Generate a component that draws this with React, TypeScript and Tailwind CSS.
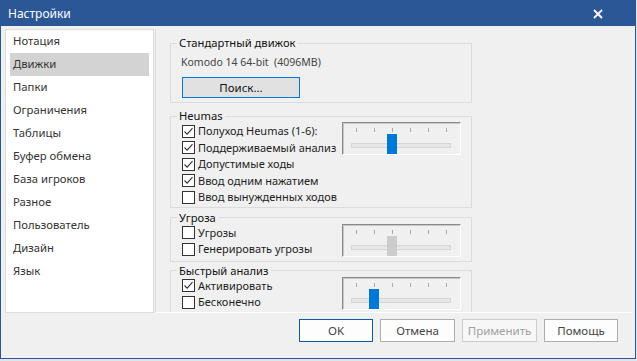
import React from 'react';

const sections = [
  'Нотация',
  'Движки',
  'Папки',
  'Ограничения',
  'Таблицы',
  'Буфер обмена',
  'База игроков',
  'Разное',
  'Пользователь',
  'Дизайн',
  'Язык',
];

const Check: React.FC<{ checked?: boolean; label: string }> = ({ checked, label }) => (
  <div className="flex items-center h-[16.5px] gap-[3px] whitespace-nowrap">
    <div className="w-[13px] h-[13px] border border-[#333] bg-white shrink-0 flex items-center justify-center">
      {checked && (
        <svg width="11" height="11" viewBox="0 0 11 11">
          <path d="M1.5 5.5 L4.2 8.2 L9.5 2.2" fill="none" stroke="#333" strokeWidth="1.1" />
        </svg>
      )}
    </div>
    <span className="text-[11px] leading-[16px] text-[#1e1e1e]">{label}</span>
  </div>
);

const TrackBar: React.FC<{ value: number; disabled?: boolean }> = ({ value, disabled }) => (
  <div className="relative w-[119px] h-[33px] mt-[-1px] shrink-0 border border-t-[#8a8a8a] border-l-[#8a8a8a] border-r-white border-b-white shadow-[inset_1px_1px_0_#c8c8c8]">
    <div className="flex gap-[17px] pl-[13px] pt-[5px]">
      {[0, 1, 2, 3, 4, 5].map((i) => (
        <div key={i} className="w-px h-[4px] bg-[#a8a8a8]" />
      ))}
    </div>
    <div className="ml-[8px] mt-[11px] w-[100px] h-[5px] border border-[#d6d6d6] bg-[#e7e7e7]" />
    <div
      className={`absolute top-[11px] w-[10px] h-[20px] ${disabled ? 'bg-[#cccccc]' : 'bg-[#0078d7]'}`}
      style={{ left: 8 + value * 18 }}
    />
  </div>
);

const Group: React.FC<{ title: string; className?: string; children: React.ReactNode }> = ({ title, className, children }) => (
  <fieldset className={`w-[302px] border border-[#dcdcdc] ${className ?? ''}`}>
    <legend className="ml-[6px] px-[2px] text-[11.2px] leading-[14px] text-[#111]">{title}</legend>
    {children}
  </fieldset>
);

export default function App() {
  return (
    <div className="w-[637px] h-[361px] bg-[#dde4ec] font-['Noto_Sans',sans-serif]">
      <div className="w-[636px] h-[359px] flex flex-col border border-[#2b5797] bg-[#f0f0f0]">
        {/* Title bar */}
        <div className="h-[25px] bg-[#2b5797] flex items-center justify-between pl-[7px] pr-[32px] shrink-0">
          <span className="text-white text-[12px] leading-[16px]">Настройки</span>
          <svg width="10" height="10" viewBox="0 0 10 10">
            <path d="M1 1 L9 9 M9 1 L1 9" stroke="#fff" strokeWidth="1.8" />
          </svg>
        </div>

        {/* Body */}
        <div className="flex pt-[3px] pl-[4px] pr-[3px] gap-[1px]">
          <div className="w-[149px] h-[284px] bg-white border border-[#dcdcdc] px-[4px] shrink-0">
            {sections.map((s) => (
              <div
                key={s}
                className={`h-[23px] flex items-center pl-[3px] text-[11.3px] text-[#333] ${s === 'Движки' ? 'bg-[#d3d3d3]' : ''}`}
              >
                {s}
              </div>
            ))}
          </div>

          <div className="flex-1 h-[284px] border-l border-l-[#dcdcdc] border-b border-b-white overflow-hidden pl-[14px] pt-[7px]">
            <Group title="Стандартный движок" className="pb-[4px]">
              <div className="pl-[10px] mt-[4px] text-[10.5px] leading-[16px] text-[#444]">
                Komodo 14 64-bit&nbsp;&nbsp;(4096MB)
              </div>
              <button className="ml-[11px] mt-[7px] w-[118px] h-[21px] border border-[#0078d7] bg-[#e1e1e1] text-[11.5px] leading-[16px] text-[#111]">
                Поиск...
              </button>
            </Group>

            <Group title="Heumas" className="mt-[6px] pb-[1px]">
              <div className="flex">
                <div className="w-[171px] pl-[11px] shrink-0">
                  <Check checked label="Полуход Heumas (1-6):" />
                  <Check checked label="Поддерживаемый анализ" />
                  <Check checked label="Допустимые ходы" />
                  <Check checked label="Ввод одним нажатием" />
                  <Check label="Ввод вынужденных ходов" />
                </div>
                <TrackBar value={2} />
              </div>
            </Group>

            <Group title="Угроза" className="mt-[3px] pb-[3px]">
              <div className="flex">
                <div className="w-[171px] pl-[11px] shrink-0">
                  <Check label="Угрозы" />
                  <Check label="Генерировать угрозы" />
                </div>
                <TrackBar value={2} disabled />
              </div>
            </Group>

            <Group title="Быстрый анализ" className="mt-[2px] pb-[3px]">
              <div className="flex">
                <div className="w-[171px] pl-[11px] shrink-0">
                  <Check checked label="Активировать" />
                  <Check label="Бесконечно" />
                </div>
                <TrackBar value={1} />
              </div>
            </Group>
          </div>
        </div>

        {/* Buttons */}
        <div className="flex justify-end gap-[7px] pr-[17px] mt-[6px]">
          <button className="w-[74px] h-[23px] border border-[#0b5cad] bg-[#fdfdfd] text-[11.5px] text-[#444]">OK</button>
          <button className="w-[75px] h-[23px] border border-[#adadad] bg-[#fdfdfd] text-[11.5px] text-[#444]">Отмена</button>
          <button className="w-[75px] h-[23px] border border-[#cccccc] bg-[#f7f7f7] text-[11.5px] text-[#a0a0a0]">Применить</button>
          <button className="w-[74px] h-[23px] border border-[#adadad] bg-[#fdfdfd] text-[11.5px] text-[#444]">Помощь</button>
        </div>
      </div>
    </div>
  );
}
